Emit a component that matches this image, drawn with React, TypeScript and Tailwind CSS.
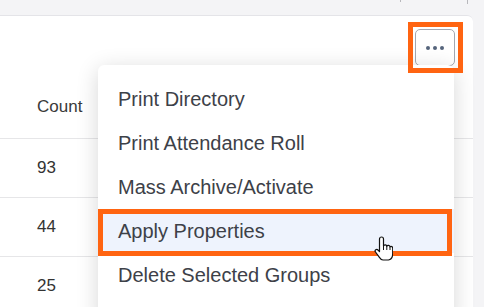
import React from "react";

const menuItems = [
  "Print Directory",
  "Print Attendance Roll",
  "Mass Archive/Activate",
  "Apply Properties",
  "Delete Selected Groups",
];

const counts = ["93", "44", "25"];

function HandCursor() {
  return (
    <svg
      width="19"
      height="26"
      viewBox="0 0 19 26"
      className="absolute left-[374px] top-[236px]"
    >
      <path
        d="M5.5 3a2 2 0 0 1 4 0V10a1.7 1.7 0 0 1 3.3.3a1.7 1.7 0 0 1 3.2.6a1.6 1.6 0 0 1 2.7 1.1V17.5c0 3.2-1.6 6-4.2 6.5H9c-1.6 0-2.6-1-3.6-2.6L1.5 16a1.6 1.6 0 0 1 2.5-2L5.5 15.6Z"
        fill="#fff"
        stroke="#111"
        strokeWidth="1.2"
        strokeLinejoin="round"
      />
      <path d="M9.5 10v4M12.8 10.3v3.7M16 11v3" stroke="#111" strokeWidth="1" />
    </svg>
  );
}

export default function App() {
  return (
    <div className="relative h-[307px] w-[484px] overflow-hidden bg-[#f4f4f6] font-['Liberation_Sans',Arial,sans-serif]">
      <div className="flex h-[15px] items-start">
        <div className="ml-[400px] h-[2px] w-px bg-[#b8b8bc]" />
        <div className="ml-[66px] h-[4px] w-px bg-[#b8b8bc]" />
      </div>

      <div className="-ml-[10px] mr-[11px] h-[292px] rounded-tr-md border-t border-[#e4e4e8] bg-white">
        <div className="flex h-[63px] justify-end pr-[18px] pt-[13px]">
          <button className="flex h-[37px] w-10 items-center justify-center gap-[3px] rounded-[5px] border border-[#a3a7b0] bg-white">
            <span className="size-[4px] rounded-full bg-[#56657c]" />
            <span className="size-[4px] rounded-full bg-[#56657c]" />
            <span className="size-[4px] rounded-full bg-[#56657c]" />
          </button>
        </div>
        <div className="flex h-[60px] items-center border-b border-[#e6e6e8] pb-[3px] pl-[47px] text-[17px] text-[#3a3a3a]">
          Count
        </div>
        {counts.map((c) => (
          <div
            key={c}
            className="flex h-[59px] items-center border-b border-[#e6e6e8] pl-[47px] text-[17px] text-[#333]"
          >
            {c}
          </div>
        ))}
      </div>

      <div className="absolute left-[98px] top-[65px] h-[260px] w-[356px] rounded-t-md bg-white pt-3 shadow-[0_4px_22px_rgba(0,0,0,0.16)]">
        {menuItems.map((item) => (
          <div
            key={item}
            className={`flex h-[44px] items-center pl-5 text-[20px] text-[#3d4148] ${
              item === "Apply Properties" ? "bg-[#eef3fd]" : ""
            }`}
          >
            {item}
          </div>
        ))}
      </div>

      <div className="absolute left-[408px] top-[22px] h-[51px] w-[55px] border-[5px] border-[#ff6411]" />
      <div className="absolute left-[98px] top-[209px] h-[47px] w-[354px] border-[5px] border-[#ff6411]" />

      <HandCursor />
    </div>
  );
}
